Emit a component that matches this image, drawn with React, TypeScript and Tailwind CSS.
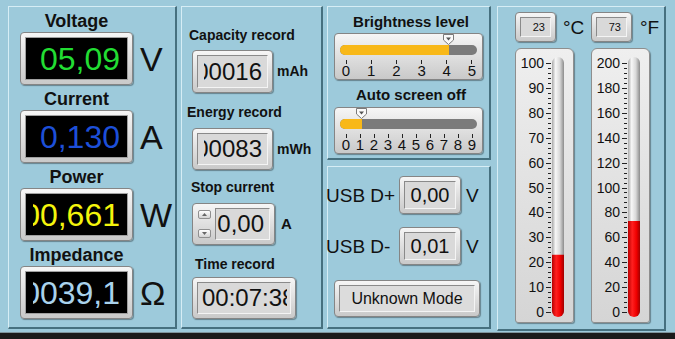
import React from "react";

const frame =
  "rounded-[4px] border border-[#858585] bg-linear-to-b from-[#f6f6f6] to-[#c9c9c9] shadow-[1px_1px_1px_rgba(0,0,0,0.35)]";
const inset = "border border-t-[#8a8a8a] border-l-[#8a8a8a] border-r-[#f4f4f4] border-b-[#f4f4f4] bg-[#d9d9d9]";

const Panel = ({ className = "", children }: { className?: string; children?: React.ReactNode }) => (
  <div
    className={`border-t border-l border-r-2 border-b-2 border-t-[#d6edf5] border-l-[#d6edf5] border-r-[#46707f] border-b-[#46707f] ${className}`}
  >
    {children}
  </div>
);

const DarkDisplay = ({ value, color }: { value: string; color: string }) => (
  <div className={`w-[113px] h-[53px] p-[4px] ${frame}`}>
    <div className="h-full bg-black border border-[#a0a0a0] flex pl-[7px] pr-[7px]">
      <div className="flex-1 flex items-center justify-end overflow-hidden">
        <span className={`text-[32px] leading-none whitespace-nowrap shrink-0 ${color}`}>{value}</span>
      </div>
    </div>
  </div>
);

const LightDisplay = ({
  value,
  w,
  h,
  size = "text-[24px]",
  align = "right",
}: {
  value: string;
  w: string;
  h: string;
  size?: string;
  align?: "right" | "left" | "center";
}) => (
  <div className={`${w} ${h} p-[4px] ${frame}`}>
    <div className={`h-full ${inset} flex ${align === "right" ? "pl-[6px] pr-[3px]" : "px-[3px]"}`}>
      <div
        className={`flex-1 flex items-center overflow-hidden ${
          align === "right" ? "justify-end pr-[2px]" : align === "left" ? "justify-start pl-[1px]" : "justify-center"
        }`}
      >
        <span className={`${size} leading-none whitespace-nowrap shrink-0 text-[#111]`}>{value}</span>
      </div>
    </div>
  </div>
);

const Thumb = () => (
  <svg width="11" height="11" viewBox="0 0 11 11">
    <path d="M0.5 0.5 H10.5 V6 L5.5 10.5 L0.5 6 Z" fill="#fafafa" stroke="#7a7a7a" />
    <path d="M3 3.5 H8 L5.5 6.5 Z" fill="#555" />
  </svg>
);

const Slider = ({ max, value }: { max: number; value: number }) => {
  const ticks = Array.from({ length: max + 1 }, (_, i) => i);
  const pos = 6 + (value / max) * 126;
  return (
    <div className={`w-[149px] h-[47px] px-[5px] pt-[11px] ${frame}`}>
      <div className="relative h-[10px] rounded-full bg-[#7b7b7b]">
        <div className="h-full rounded-l-full bg-[#f8b818]" style={{ width: pos + 2 }} />
        <div className="absolute top-[-11px]" style={{ left: pos - 4 }}>
          <Thumb />
        </div>
      </div>
      <div className="flex justify-between ml-[6px] mr-[5px] mt-[5px]">
        {ticks.map((i) => (
          <div key={i} className="w-0 flex flex-col items-center">
            <div className="w-[1px] h-[4px] bg-[#222] shrink-0" />
            <span className="text-[15px] leading-[14px] text-[#111]">{i}</span>
          </div>
        ))}
      </div>
    </div>
  );
};

const Thermo = ({ max, step, value }: { max: number; step: number; value: number }) => {
  const y = (v: number) => 263 - (v / max) * 249;
  const labels: number[] = [];
  for (let v = 0; v <= max; v += step) labels.push(v);
  const ticks = Array.from({ length: 51 }, (_, i) => i);
  const top = y(value);
  return (
    <div className="w-[59px] h-[275px] rounded-t-[6px] rounded-b-[3px] border border-[#8e8e8e] bg-linear-to-b from-[#efefef] to-[#d5d5d5] shadow-[1px_1px_1px_rgba(0,0,0,0.35)]">
      <svg width="57" height="273" className="block">
        <defs>
          <linearGradient id="tubeG" x1="0" x2="1" y1="0" y2="0">
            <stop offset="0" stopColor="#a8a8a8" />
            <stop offset="0.3" stopColor="#f7f7f7" />
            <stop offset="0.65" stopColor="#d9d9d9" />
            <stop offset="1" stopColor="#8c8c8c" />
          </linearGradient>
          <linearGradient id="redG" x1="0" x2="1" y1="0" y2="0">
            <stop offset="0" stopColor="#b80000" />
            <stop offset="0.35" stopColor="#ff2020" />
            <stop offset="0.7" stopColor="#f00000" />
            <stop offset="1" stopColor="#a00000" />
          </linearGradient>
        </defs>
        {labels.map((v) => (
          <text
            key={v}
            x="28"
            y={y(v) + 5}
            textAnchor="end"
            fontFamily="'Liberation Sans', Arial, sans-serif"
            fontSize="14"
            fill="#111"
          >
            {v}
          </text>
        ))}
        {ticks.map((i) => {
          const ty = Math.round(263 - i * (249 / 50));
          const major = i % 5 === 0;
          return <rect key={i} x={major ? 30 : 32} y={ty} width={major ? 5 : 3} height="1" fill="#222" />;
        })}
        <rect x="36" y="8" width="12" height="260" rx="6" fill="url(#tubeG)" />
        <path d={`M36 ${top} H48 V262 A6 6 0 0 1 36 262 Z`} fill="url(#redG)" />
      </svg>
    </div>
  );
};

const SmallBox = ({ value }: { value: string }) => (
  <div className={`w-[41px] h-[30px] p-[4px] ${frame}`}>
    <div className={`h-full ${inset} flex items-center justify-end pr-[5px]`}>
      <span className="text-[11px] leading-none text-[#111]">{value}</span>
    </div>
  </div>
);

const Spin = ({ up }: { up?: boolean }) => (
  <div className="w-[13px] h-[9px] rounded-[2px] border border-[#8f8f8f] bg-linear-to-b from-white to-[#d3d3d3] flex items-center justify-center">
    <svg width="5" height="3" viewBox="0 0 5 3">
      <path d={up ? "M0 3 L2.5 0 L5 3 Z" : "M0 0 L2.5 3 L5 0 Z"} fill="#666" />
    </svg>
  </div>
);

export default function App() {
  const meters = [
    { label: "Voltage", value: "05,09", color: "text-[#22dd33]", unit: "V" },
    { label: "Current", value: "0,130", color: "text-[#1d4fd8]", unit: "A" },
    { label: "Power", value: "00,661", color: "text-[#f4f40c]", unit: "W" },
    { label: "Impedance", value: "0039,1", color: "text-[#a9d2ec]", unit: "Ω" },
  ];

  return (
    <div className="w-[675px] h-[339px] bg-[#9dcadb] flex flex-col overflow-hidden font-['Liberation_Sans',Arial,sans-serif] text-[#111]">
      <div className="h-[332px] flex pt-[6px] pl-[8px]">
        {/* Meters */}
        <Panel className="w-[169px] h-[323px] pl-[11px]">
          {meters.map((m) => (
            <div key={m.label} className="flex flex-col">
              <div className="w-[113px] h-[25px] pt-[3px] flex items-center justify-center text-[18px] font-bold leading-none">
                {m.label}
              </div>
              <div className="flex items-center">
                <DarkDisplay value={m.value} color={m.color} />
                <span className="ml-[7px] text-[34px] leading-none">{m.unit}</span>
              </div>
            </div>
          ))}
        </Panel>

        {/* Records */}
        <Panel className="ml-[4px] w-[142px] h-[323px] flex flex-col">
          <div className="mt-[18px] ml-[7px] h-[20px] flex items-center text-[14px] font-bold">Capacity record</div>
          <div className="mt-[5px] ml-[10px] flex items-center">
            <LightDisplay value="00016" w="w-[81px]" h="h-[43px]" />
            <span className="ml-[4px] text-[14px] font-bold">mAh</span>
          </div>
          <div className="mt-[9px] ml-[5px] h-[20px] flex items-center text-[14px] font-bold">Energy record</div>
          <div className="mt-[6px] ml-[10px] flex items-center">
            <LightDisplay value="00083" w="w-[81px]" h="h-[42px]" />
            <span className="ml-[4px] text-[14px] font-bold">mWh</span>
          </div>
          <div className="mt-[7px] ml-[9px] h-[20px] flex items-center text-[14px] font-bold">Stop current</div>
          <div className="mt-[6px] ml-[10px] flex items-center">
            <div className={`w-[83px] h-[42px] flex pl-[5px] pr-[4px] py-[4px] ${frame}`}>
              <div className="w-[13px] flex flex-col justify-between py-[2px]">
                <Spin up />
                <Spin />
              </div>
              <div className={`ml-[4px] flex-1 ${inset} flex items-center justify-end pr-[5px]`}>
                <span className="text-[24px] leading-none">0,00</span>
              </div>
            </div>
            <span className="ml-[6px] text-[15px] font-bold">A</span>
          </div>
          <div className="mt-[9px] ml-[13px] h-[20px] flex items-center text-[14px] font-bold">Time record</div>
          <div className="mt-[3px] ml-[10px]">
            <LightDisplay value="00:07:38" w="w-[104px]" h="h-[42px]" align="left" />
          </div>
        </Panel>

        {/* Settings column */}
        <div className="ml-[4px] w-[164px] flex flex-col">
          <Panel className="h-[154px] flex flex-col items-center">
            <div className="mt-[5px] h-[20px] pl-[5px] flex items-center text-[15px] font-bold">Brightness level</div>
            <div className="mt-[1px]">
              <Slider max={5} value={4} />
            </div>
            <div className="mt-[5px] h-[20px] pl-[5px] flex items-center text-[15px] font-bold">Auto screen off</div>
            <div className="mt-[2px]">
              <Slider max={9} value={1} />
            </div>
          </Panel>
          <Panel className="mt-[6px] h-[163px] flex flex-col">
            <div className="mt-[9px] flex items-center">
              <span className="w-[73px] -ml-[2px] text-[19px] leading-none">USB D+</span>
              <LightDisplay value="0,00" w="w-[62px]" h="h-[38px]" size="text-[20px]" align="center" />
              <span className="ml-[5px] text-[19px] leading-none">V</span>
            </div>
            <div className="mt-[13px] flex items-center">
              <span className="w-[73px] -ml-[2px] text-[19px] leading-none">USB D-</span>
              <LightDisplay value="0,01" w="w-[62px]" h="h-[38px]" size="text-[20px]" align="center" />
              <span className="ml-[5px] text-[19px] leading-none">V</span>
            </div>
            <div className={`mt-[15px] ml-[6px] w-[146px] h-[37px] p-[4px] ${frame}`}>
              <div className="h-full border border-t-[#8a8a8a] border-l-[#8a8a8a] border-r-[#f4f4f4] border-b-[#f4f4f4] bg-[#dcdcdc] flex items-center justify-center">
                <span className="text-[16px] leading-none">Unknown Mode</span>
              </div>
            </div>
          </Panel>
        </div>

        {/* Temperature */}
        <Panel className="ml-[6px] w-[169px] h-[325px] flex flex-col">
          <div className="mt-[5px] ml-[17px] flex items-center">
            <SmallBox value="23" />
            <span className="w-[35px] pl-[7px] text-[19px] leading-none">°C</span>
            <SmallBox value="73" />
            <span className="pl-[8px] text-[19px] leading-none">°F</span>
          </div>
          <div className="mt-[6px] ml-[17px] flex gap-[17px]">
            <Thermo max={100} step={10} value={23} />
            <Thermo max={200} step={20} value={73} />
          </div>
        </Panel>
      </div>
      <div className="flex-1 border-t border-t-[#7f949c] bg-[#1b1b1b]" />
    </div>
  );
}
